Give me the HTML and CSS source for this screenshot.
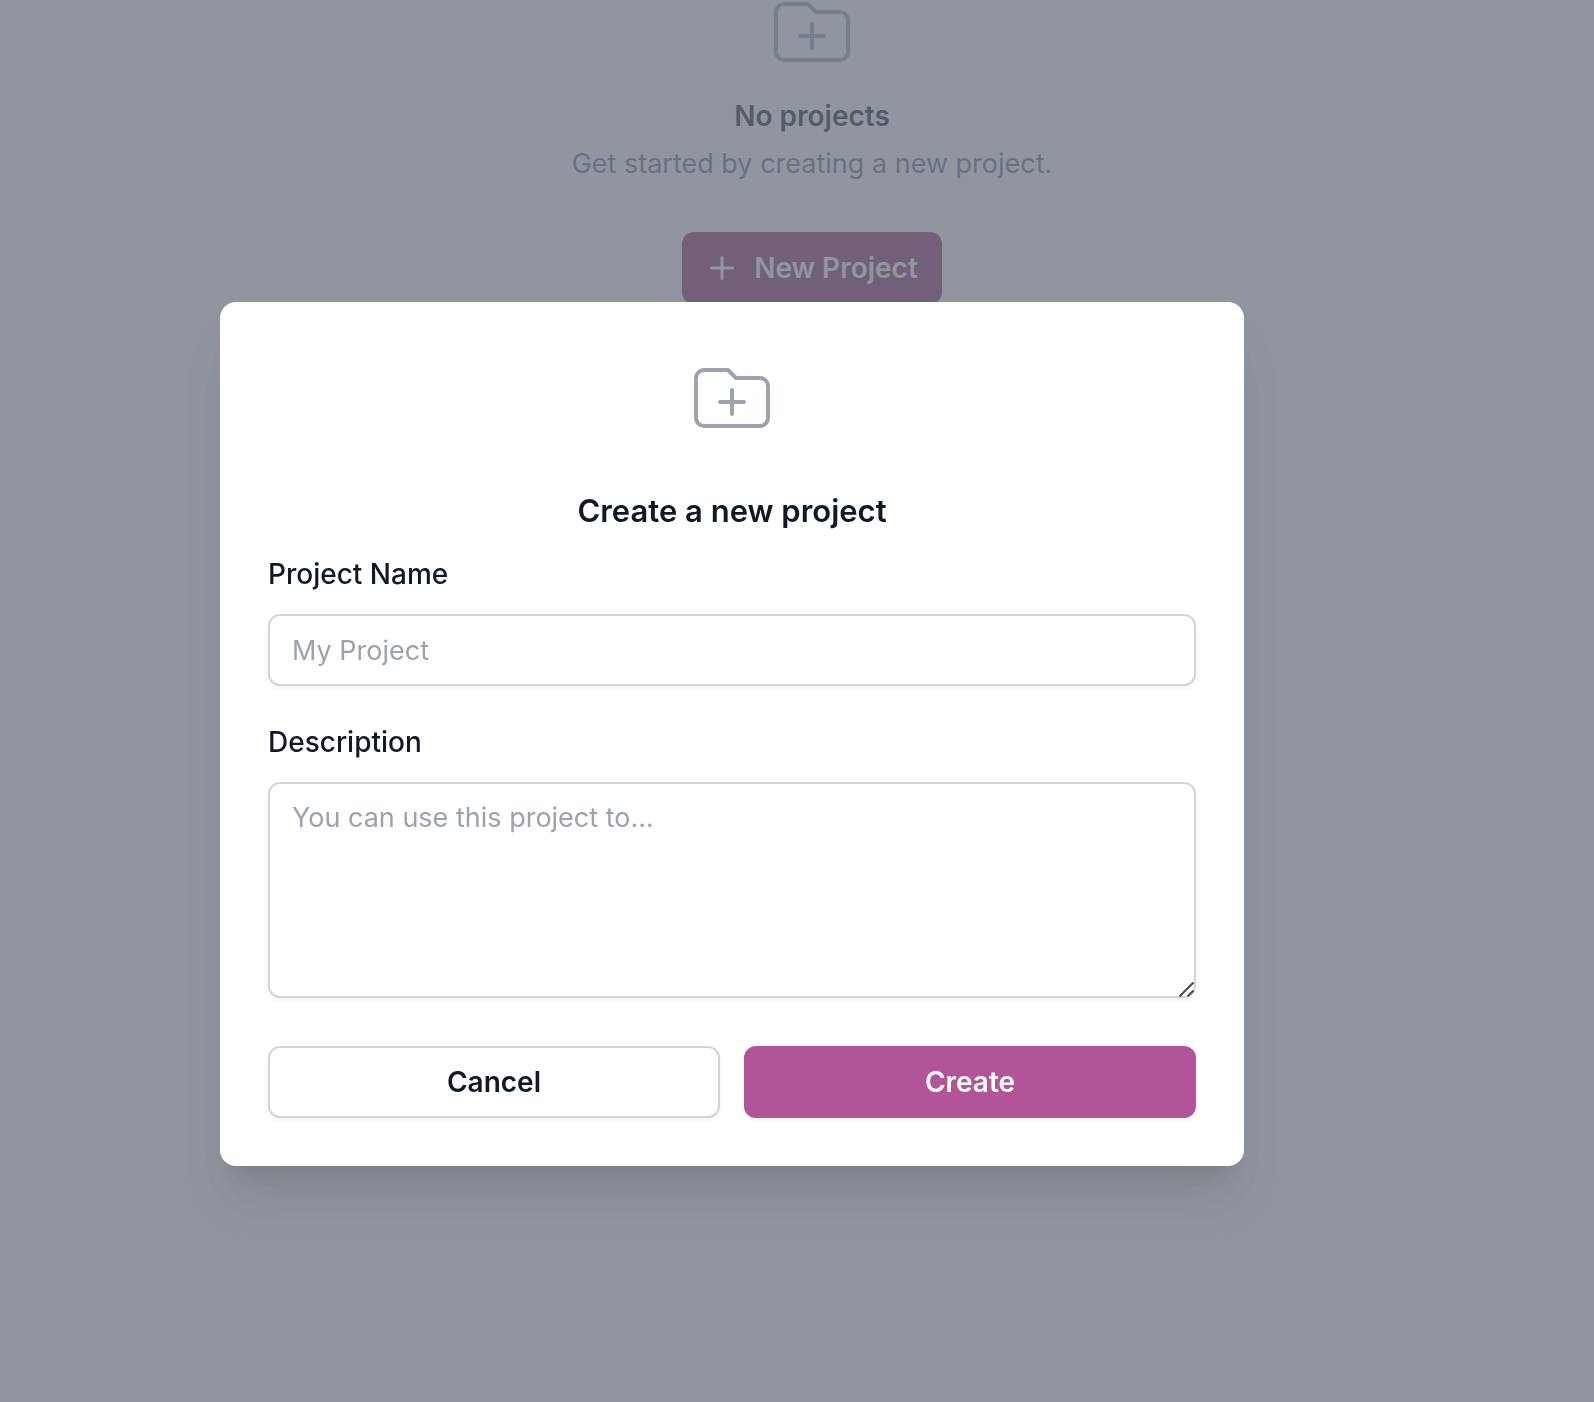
FILE: index.html
```html
<!DOCTYPE html>
<html lang="en">
<head>
  <meta charset="utf-8">
  <meta name="viewport" content="width=device-width, initial-scale=1">
  <title>Create a new project</title>
  <link rel="stylesheet" href="styles.css">
</head>
<body>
  <main class="empty-state">
    <svg class="folder-icon" viewBox="0 0 24 24" aria-hidden="true">
      <path d="M9 13h6m-3-3v6m-9 1V7a2 2 0 012-2h6l2 2h6a2 2 0 012 2v8a2 2 0 01-2 2H5a2 2 0 01-2-2z"/>
    </svg>
    <h1 class="empty-title">No projects</h1>
    <p class="empty-text">Get started by creating a new project.</p>
    <button type="button" class="button button-primary button-new">
      <svg class="plus-icon" viewBox="0 0 20 20" aria-hidden="true">
        <path d="M10.75 4.75a.75.75 0 00-1.5 0v4.5h-4.5a.75.75 0 000 1.5h4.5v4.5a.75.75 0 001.5 0v-4.5h4.5a.75.75 0 000-1.5h-4.5v-4.5z"/>
      </svg>
      New Project
    </button>
  </main>

  <div class="backdrop"></div>

  <div class="dialog-layer">
    <form class="dialog" role="dialog" aria-modal="true" aria-labelledby="dialog-title">
      <svg class="folder-icon" viewBox="0 0 24 24" aria-hidden="true">
        <path d="M9 13h6m-3-3v6m-9 1V7a2 2 0 012-2h6l2 2h6a2 2 0 012 2v8a2 2 0 01-2 2H5a2 2 0 01-2-2z"/>
      </svg>
      <h2 class="dialog-title" id="dialog-title">Create a new project</h2>
      <div class="fields">
        <div class="field">
          <label class="label" for="project-name">Project Name</label>
          <input class="control" type="text" id="project-name" placeholder="My Project">
        </div>
        <div class="field">
          <label class="label" for="description">Description</label>
          <div class="textarea-wrap">
            <textarea class="control control-area" id="description" placeholder="You can use this project to..."></textarea>
            <svg class="resize-grip" viewBox="0 0 16 16" aria-hidden="true">
              <path d="M0.5 15.5L14.5 1.5M8.5 15.5L14.5 9.5"/>
            </svg>
          </div>
        </div>
      </div>
      <div class="actions">
        <button type="button" class="button button-secondary">Cancel</button>
        <button type="button" class="button button-primary">Create</button>
      </div>
    </form>
  </div>
</body>
</html>
```
FILE: styles.css
```css
*,
*::before,
*::after {
  box-sizing: border-box;
}

body {
  margin: 0;
  min-height: 100vh;
  overflow: hidden;
  background: #fff;
  color: #111827;
  font-family: Inter, "Liberation Sans", sans-serif;
  font-size: 28px;
  line-height: 40px;
}

h1,
h2,
p {
  margin: 0;
}

/* Page behind the dialog */
.empty-state {
  display: flex;
  flex-direction: column;
  align-items: center;
  margin-top: -16px;
  padding-left: 30px;
}

.folder-icon {
  display: block;
  width: 96px;
  height: 96px;
  fill: none;
  stroke: #9ca3af;
  stroke-width: 1;
  stroke-linecap: round;
  stroke-linejoin: round;
}

.empty-title {
  margin-top: 16px;
  font-size: 28px;
  font-weight: 600;
}

.empty-text {
  margin-top: 8px;
  color: #6b7280;
  font-size: 27px;
}

/* Buttons */
.button {
  display: flex;
  align-items: center;
  justify-content: center;
  padding: 16px 24px;
  border: 0;
  border-radius: 12px;
  box-shadow: 0 2px 4px rgba(0, 0, 0, 0.05);
  font: inherit;
  font-weight: 600;
}

.button-primary {
  background: #b15498;
  color: #fff;
}

.button-secondary {
  padding: 14px 22px;
  border: 2px solid #d1d5db;
  background: #fff;
  color: #111827;
}

.button-new {
  gap: 12px;
  margin-top: 48px;
  padding-left: 20px;
  background: #862a67;
}

.plus-icon {
  width: 40px;
  height: 40px;
  fill: currentColor;
}

/* Dialog */
.backdrop {
  position: fixed;
  inset: 0;
  background: rgba(107, 114, 128, 0.75);
}

.dialog-layer {
  position: fixed;
  inset: 0;
  display: flex;
  align-items: center;
  justify-content: center;
  padding: 66px 130px 0 0;
}

.dialog {
  display: flex;
  flex-direction: column;
  width: 100%;
  max-width: 1024px;
  padding: 48px;
  border-radius: 16px;
  background: #fff;
  box-shadow:
    0 40px 50px -10px rgba(0, 0, 0, 0.1),
    0 16px 20px -12px rgba(0, 0, 0, 0.1);
}

.dialog .folder-icon {
  align-self: center;
}

.dialog-title {
  margin-top: 40px;
  font-size: 31px;
  font-weight: 600;
  line-height: 50px;
  text-align: center;
}

.fields {
  display: flex;
  flex-direction: column;
  gap: 32px;
  margin-top: 14px;
}

.field {
  display: flex;
  flex-direction: column;
  gap: 16px;
}

.label {
  font-weight: 500;
  line-height: 48px;
}

.control {
  display: block;
  width: 100%;
  height: 72px;
  padding: 14px 22px;
  border: 2px solid #d1d5db;
  border-radius: 12px;
  outline: 0;
  background: #fff;
  box-shadow: 0 2px 4px rgba(0, 0, 0, 0.05);
  color: #111827;
  font: inherit;
  font-size: 27px;
}

.control::placeholder {
  color: #9ca3af;
  opacity: 1;
}

.textarea-wrap {
  position: relative;
}

.control-area {
  height: 216px;
  resize: vertical;
}

.control-area::-webkit-resizer {
  background: transparent;
}

.resize-grip {
  position: absolute;
  right: 1px;
  bottom: 1px;
  width: 16px;
  height: 16px;
  fill: none;
  stroke: #4b4b4b;
  stroke-width: 2;
  pointer-events: none;
}

.actions {
  display: grid;
  grid-template-columns: 1fr 1fr;
  gap: 24px;
  margin-top: 48px;
}
```
